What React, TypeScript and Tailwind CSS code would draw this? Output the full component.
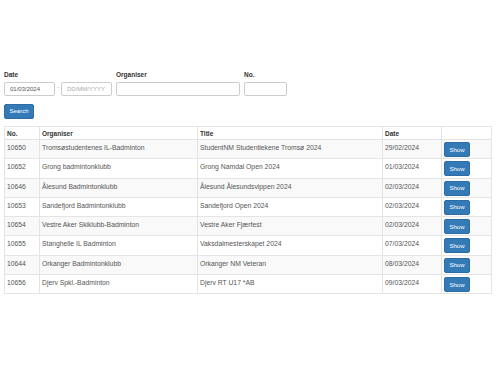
import React from "react";

type Row = {
  no: string;
  organiser: string;
  title: string;
  date: string;
};

const rows: Row[] = [
  { no: "10650", organiser: "Tromsøstudentenes IL-Badminton", title: "StudentNM Studentlekene Tromsø 2024", date: "29/02/2024" },
  { no: "10652", organiser: "Grong badmintonklubb", title: "Grong Namdal Open 2024", date: "01/03/2024" },
  { no: "10646", organiser: "Ålesund Badmintonklubb", title: "Ålesund Ålesundsvippen 2024", date: "02/03/2024" },
  { no: "10653", organiser: "Sandefjord Badmintonklubb", title: "Sandefjord Open 2024", date: "02/03/2024" },
  { no: "10654", organiser: "Vestre Aker Skiklubb-Badminton", title: "Vestre Aker Fjærfest", date: "02/03/2024" },
  { no: "10655", organiser: "Stanghelle IL Badminton", title: "Vaksdalmesterskapet 2024", date: "07/03/2024" },
  { no: "10644", organiser: "Orkanger Badmintonklubb", title: "Orkanger NM Veteran", date: "08/03/2024" },
  { no: "10656", organiser: "Djerv Spkl.-Badminton", title: "Djerv RT U17 *AB", date: "09/03/2024" },
];

function Field({ label, children }: { label: string; children: React.ReactNode }) {
  return (
    <div className="flex flex-col">
      <label className="font-bold text-[6.5px] leading-[8px] text-[#333] mb-[3px]">{label}</label>
      {children}
    </div>
  );
}

export default function App() {
  return (
    <div
      className="w-[500px] h-[375px] bg-white pt-[71px] px-[4px] text-[#333]"
      style={{ fontFamily: '"Liberation Sans", Arial, sans-serif' }}
    >
      <form className="flex items-end gap-[4px]">
        <Field label="Date">
          <div className="flex items-center">
            <input
              className="w-[51px] h-[14px] border border-[#ccc] rounded-[2px] px-[5px] text-[6px] text-[#555] outline-none"
              defaultValue="01/03/2024"
            />
            <span className="w-[6px] text-center text-[6px] text-[#999] leading-none -mt-[4px]">-</span>
            <input
              className="w-[51px] h-[14px] border border-[#ccc] rounded-[2px] px-[5px] text-[6px] text-[#555] placeholder:text-[#aaa] outline-none"
              placeholder="DD/MM/YYYY"
            />
          </div>
        </Field>
        <Field label="Organiser">
          <input className="w-[124px] h-[14px] border border-[#ccc] rounded-[2px] outline-none" />
        </Field>
        <Field label="No.">
          <input className="w-[43px] h-[14px] border border-[#ccc] rounded-[2px] outline-none" />
        </Field>
      </form>

      <button
        type="button"
        className="mt-[6px] w-[30px] h-[15px] bg-[#337ab7] border border-[#2e6da4] rounded-[2px] text-white text-[6px] leading-none"
      >
        Search
      </button>

      <table className="mt-[6px] w-[487px] border-collapse text-[6.8px] leading-[7px] table-fixed">
        <colgroup>
          <col className="w-[35px]" />
          <col className="w-[158px]" />
          <col className="w-[185px]" />
          <col className="w-[59px]" />
          <col className="w-[50px]" />
        </colgroup>
        <thead>
          <tr className="h-[13px]">
            <th className="border border-[#e4e4e4] text-left font-bold px-[2px] align-middle text-[6.5px]">No.</th>
            <th className="border border-[#e4e4e4] text-left font-bold px-[2px] align-middle text-[6.5px]">Organiser</th>
            <th className="border border-[#e4e4e4] text-left font-bold px-[2px] align-middle text-[6.5px]">Title</th>
            <th className="border border-[#e4e4e4] text-left font-bold px-[2px] align-middle text-[6.5px]">Date</th>
            <th className="border border-[#e4e4e4]"></th>
          </tr>
        </thead>
        <tbody className="text-[#555]">
          {rows.map((r, i) => (
            <tr key={r.no} className={i % 2 === 0 ? "bg-[#f9f9f9] h-[19.3px]" : "bg-white h-[19.3px]"}>
              <td className="border border-[#e4e4e4] px-[2px] pt-[4px] align-top">{r.no}</td>
              <td className="border border-[#e4e4e4] px-[2px] pt-[4px] align-top whitespace-nowrap overflow-hidden">{r.organiser}</td>
              <td className="border border-[#e4e4e4] px-[2px] pt-[4px] align-top whitespace-nowrap overflow-hidden">{r.title}</td>
              <td className="border border-[#e4e4e4] px-[2px] pt-[4px] align-top">{r.date}</td>
              <td className="border border-[#e4e4e4] pl-[2px] pt-[2px] pb-[1px] align-top">
                <button
                  type="button"
                  className="block w-[26px] h-[15px] bg-[#337ab7] border border-[#2e6da4] rounded-[2px] text-white text-[6px] leading-none"
                >
                  Show
                </button>
              </td>
            </tr>
          ))}
        </tbody>
      </table>
    </div>
  );
}
